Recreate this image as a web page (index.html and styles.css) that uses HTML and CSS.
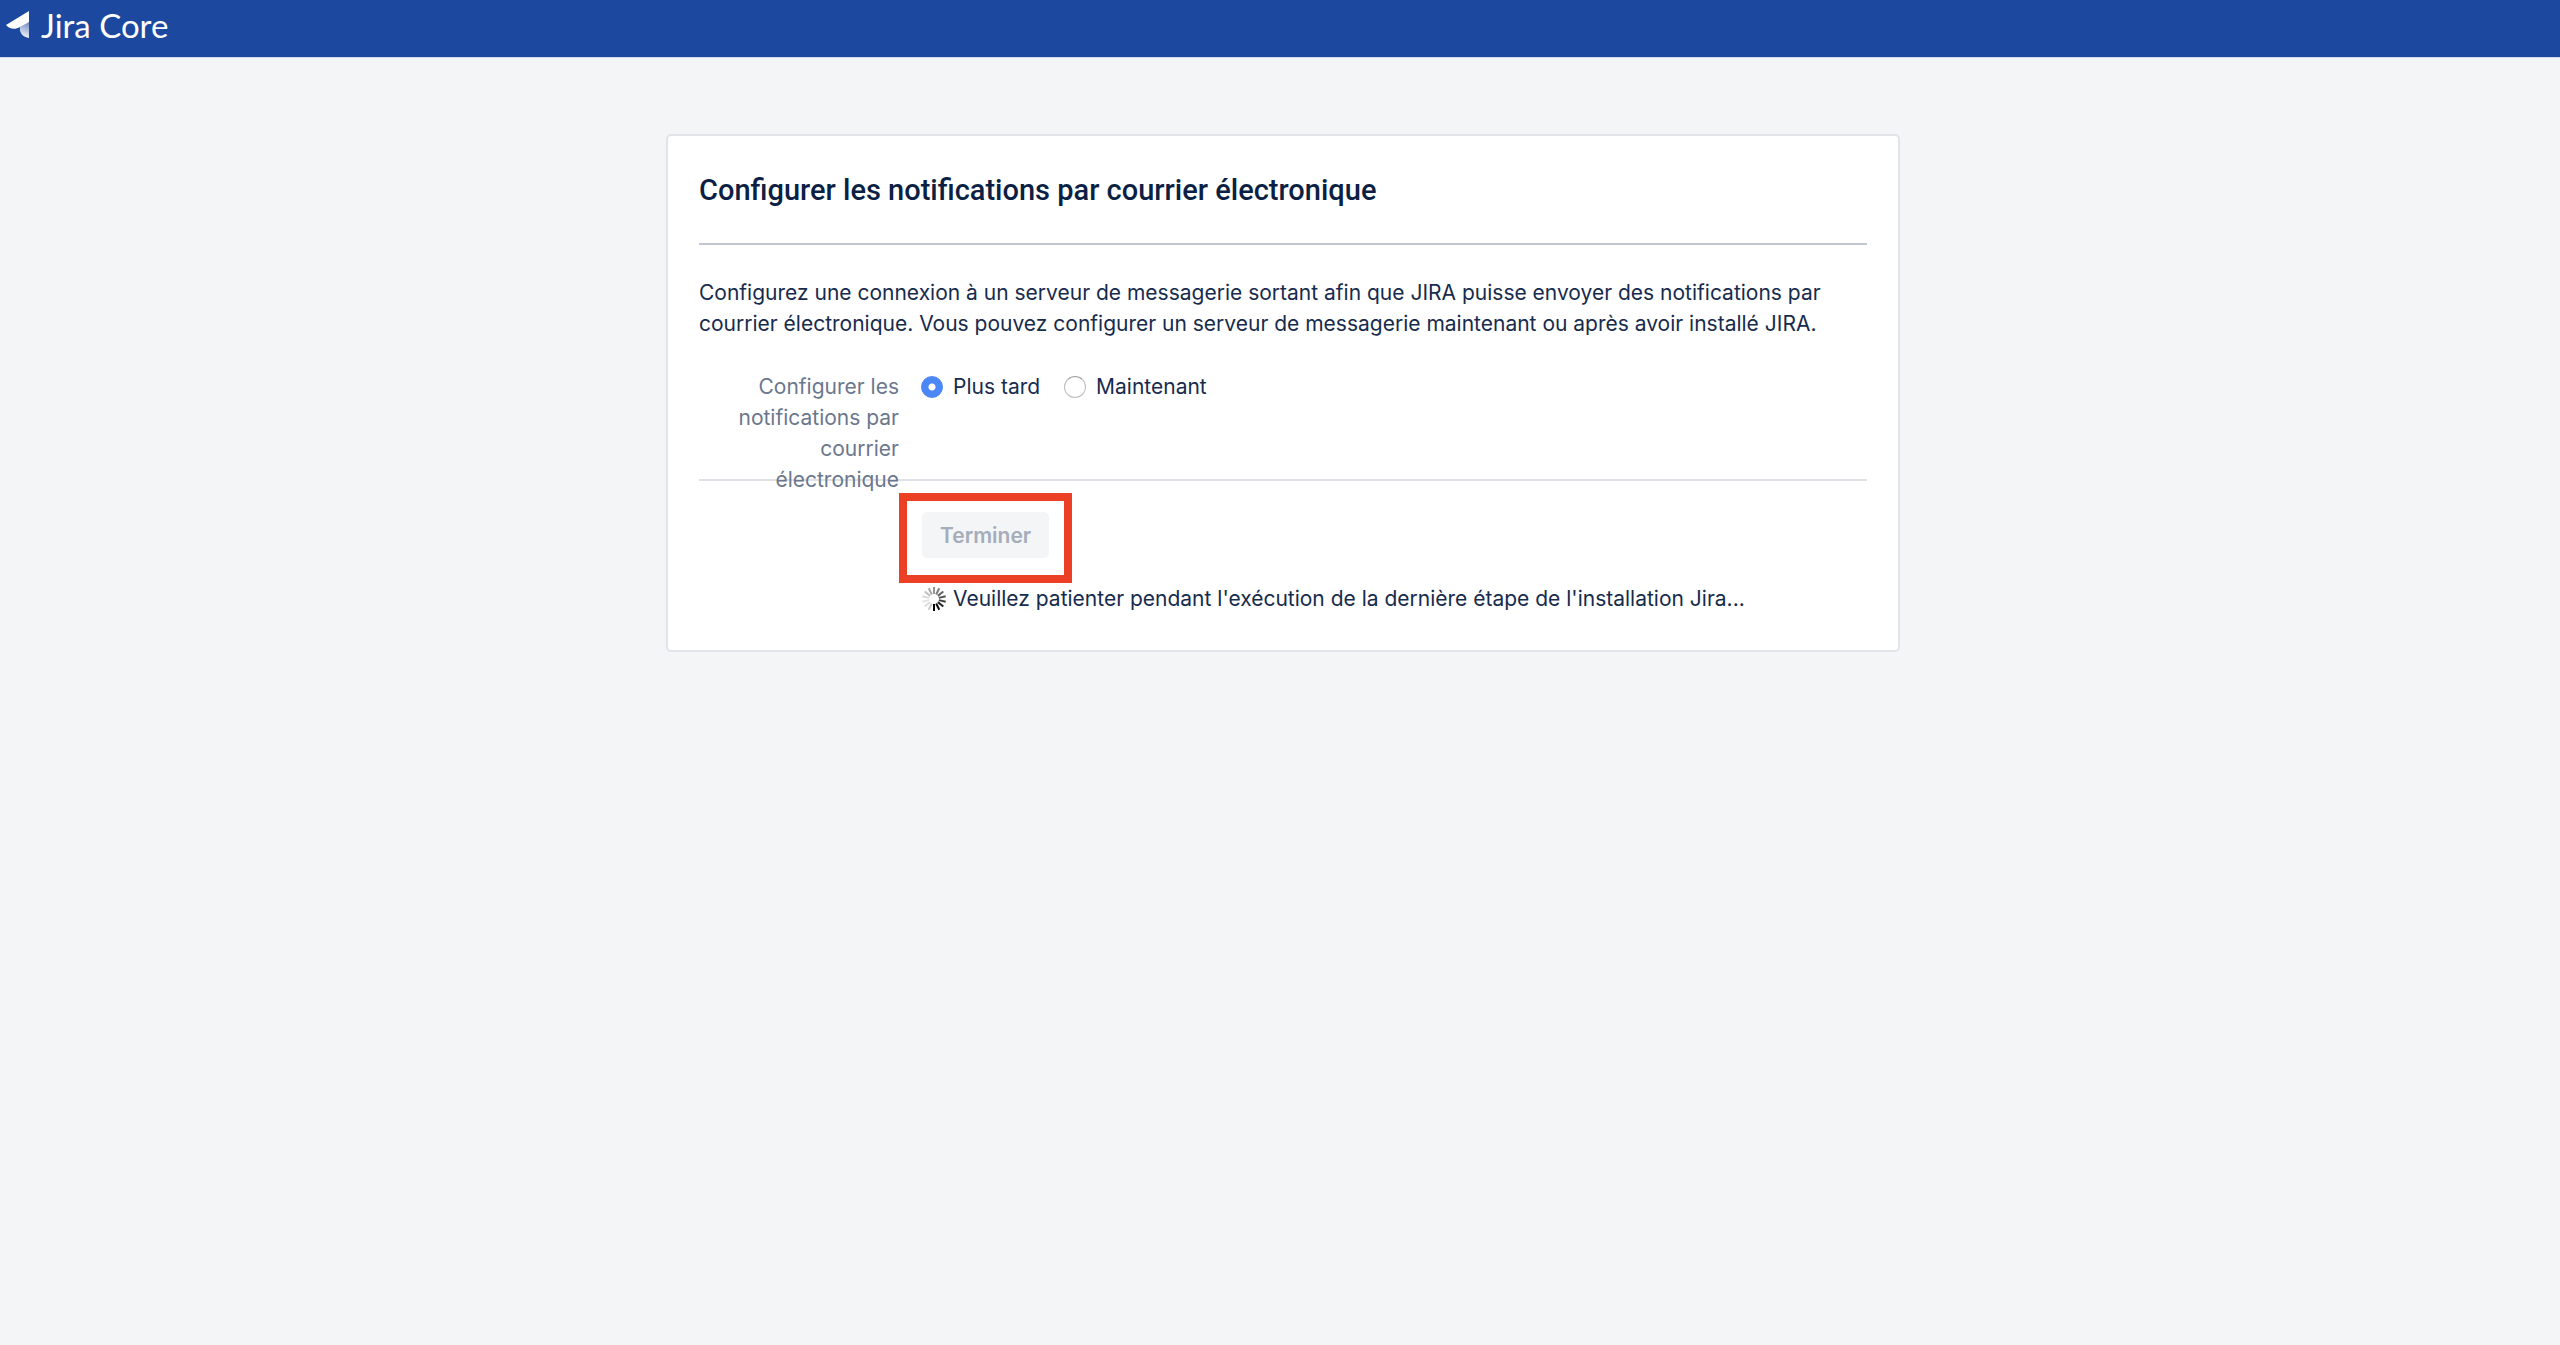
FILE: index.html
```
<!DOCTYPE html>
<html lang="fr">
<head>
  <meta charset="UTF-8" />
  <meta name="viewport" content="width=device-width, initial-scale=1.0" />
  <title>Jira Core</title>
  <link rel="stylesheet" href="styles.css">
</head>
<body>

  <!-- Header -->
  <header class="header">
    <a class="logo" href="#">
      <svg class="logo-icon" viewBox="0 0 24 28" aria-hidden="true">
        <defs>
          <linearGradient id="fold" x1="0.7" y1="0" x2="0.5" y2="1">
            <stop offset="0" stop-color="#fff" stop-opacity="0.35" />
            <stop offset="1" stop-color="#fff" stop-opacity="0.95" />
          </linearGradient>
        </defs>
        <path fill="url(#fold)" d="M23 10v17C17 26 13 22 14 16z" />
        <path fill="#fff" d="M23 0v11L14 16C9 19 3 18 0 14z" />
      </svg>
      <span>Jira Core</span>
    </a>
  </header>

  <!-- Setup card -->
  <main class="page">
    <form class="card">
      <h1>Configurer les notifications par courrier électronique</h1>

      <p class="intro">Configurez une connexion à un serveur de messagerie sortant afin que JIRA puisse envoyer des notifications par courrier électronique. Vous pouvez configurer un serveur de messagerie maintenant ou après avoir installé JIRA.</p>

      <div class="field-group" role="radiogroup" aria-labelledby="notifLabel">
        <div class="field-label" id="notifLabel">Configurer les notifications par courrier électronique</div>
        <div class="options">
          <label class="option" for="later">
            <input type="radio" id="later" name="notifications" value="later" checked />
            Plus tard
          </label>
          <label class="option" for="now">
            <input type="radio" id="now" name="notifications" value="now" />
            Maintenant
          </label>
        </div>
      </div>

      <div class="actions">
        <div class="highlight">
          <button type="submit" disabled>Terminer</button>
        </div>
        <div class="status" role="status">
          <svg class="spinner" viewBox="-13 -13 26 26" aria-hidden="true">
            <path d="M0 5V12" />
            <path d="M0 5V12" transform="rotate(-26)" opacity="0.95" />
            <path d="M0 5V12" transform="rotate(-51)" opacity="0.85" />
            <path d="M0 5V12" transform="rotate(-77)" opacity="0.75" />
            <path d="M0 5V12" transform="rotate(-103)" opacity="0.68" />
            <path d="M0 5V12" transform="rotate(-129)" opacity="0.6" />
            <path d="M0 5V12" transform="rotate(-154)" opacity="0.5" />
            <path d="M0 5V12" transform="rotate(-180)" opacity="0.42" />
            <path d="M0 5V12" transform="rotate(-206)" opacity="0.34" />
            <path d="M0 5V12" transform="rotate(-231)" opacity="0.24" />
            <path d="M0 5V12" transform="rotate(-257)" opacity="0.14" />
            <path d="M0 5V12" transform="rotate(-283)" opacity="0.1" />
            <path d="M0 5V12" transform="rotate(-309)" opacity="0.12" />
            <path d="M0 5V12" transform="rotate(-334)" opacity="0.2" />
          </svg>
          <span>Veuillez patienter pendant l'exécution de la dernière étape de l'installation Jira...</span>
        </div>
      </div>
    </form>
  </main>

</body>
</html>
```
FILE: styles.css
```
* {
  margin: 0;
  padding: 0;
  box-sizing: border-box;
}

body {
  background: #f4f5f7;
  color: #172b4d;
  font-family: Inter, "Liberation Sans", sans-serif;
  font-size: 21px;
  line-height: 31px;
}

/* Header */
.header {
  height: 58px;
  padding: 5px 6px;
  background: #1d489f;
  border-bottom: 1px solid #d3daea;
}

.logo {
  display: inline-flex;
  align-items: center;
  gap: 11px;
  color: white;
  font-family: Lato, sans-serif;
  font-size: 33px;
  line-height: 40px;
  text-decoration: none;
}

.logo-icon {
  width: 24px;
  height: 28px;
}

/* Card */
.page {
  padding: 76px 0 76px 6px;
}

.card {
  max-width: 1234px;
  margin: 0 auto;
  padding: 34px 31px 36px;
  background: white;
  border: 2px solid #e2e4e9;
  border-radius: 5px;
}

h1 {
  padding-bottom: 33px;
  border-bottom: 2px solid #c1c7d0;
  color: #0c1f44;
  font-family: Roboto, sans-serif;
  font-size: 29px;
  font-weight: 500;
  line-height: 40px;
}

.intro {
  margin-top: 32px;
}

/* The label is taller than its row and runs over the line below */
.field-group {
  display: flex;
  gap: 22px;
  min-height: 108px;
  margin-top: 32px;
}

.field-label {
  width: 200px;
  flex-shrink: 0;
  margin-bottom: -16px;
  padding-left: 32px;
  color: #6b778c;
  text-align: right;
}

.options {
  display: flex;
  gap: 24px;
  height: 31px;
}

.option {
  display: flex;
  align-items: center;
  gap: 10px;
}

.option input {
  appearance: none;
  width: 22px;
  height: 22px;
  background: white;
  border: 1px solid #bdbdbd;
  border-top-color: #a0a0a0;
  border-radius: 50%;
}

.option input:checked {
  background: radial-gradient(circle, white 3px, #4c87f6 4px);
  border-color: #4c87f6;
}

/* Actions */
.actions {
  padding: 12px 0 0 200px;
  border-top: 2px solid #dfe1e6;
}

.highlight {
  display: inline-block;
  padding: 11px 15px 17px;
  border: 8px solid #ec4026;
}

button {
  display: block;
  height: 46px;
  padding: 0 18px;
  background: #f4f5f7;
  border: none;
  border-radius: 5px;
  color: #a5adba;
  font-family: inherit;
  font-size: 21px;
  font-weight: 600;
}

.status {
  display: flex;
  align-items: center;
  gap: 6px;
  padding-left: 22px;
}

.spinner {
  width: 26px;
  height: 26px;
  flex-shrink: 0;
  stroke: black;
  stroke-width: 2;
}
```
